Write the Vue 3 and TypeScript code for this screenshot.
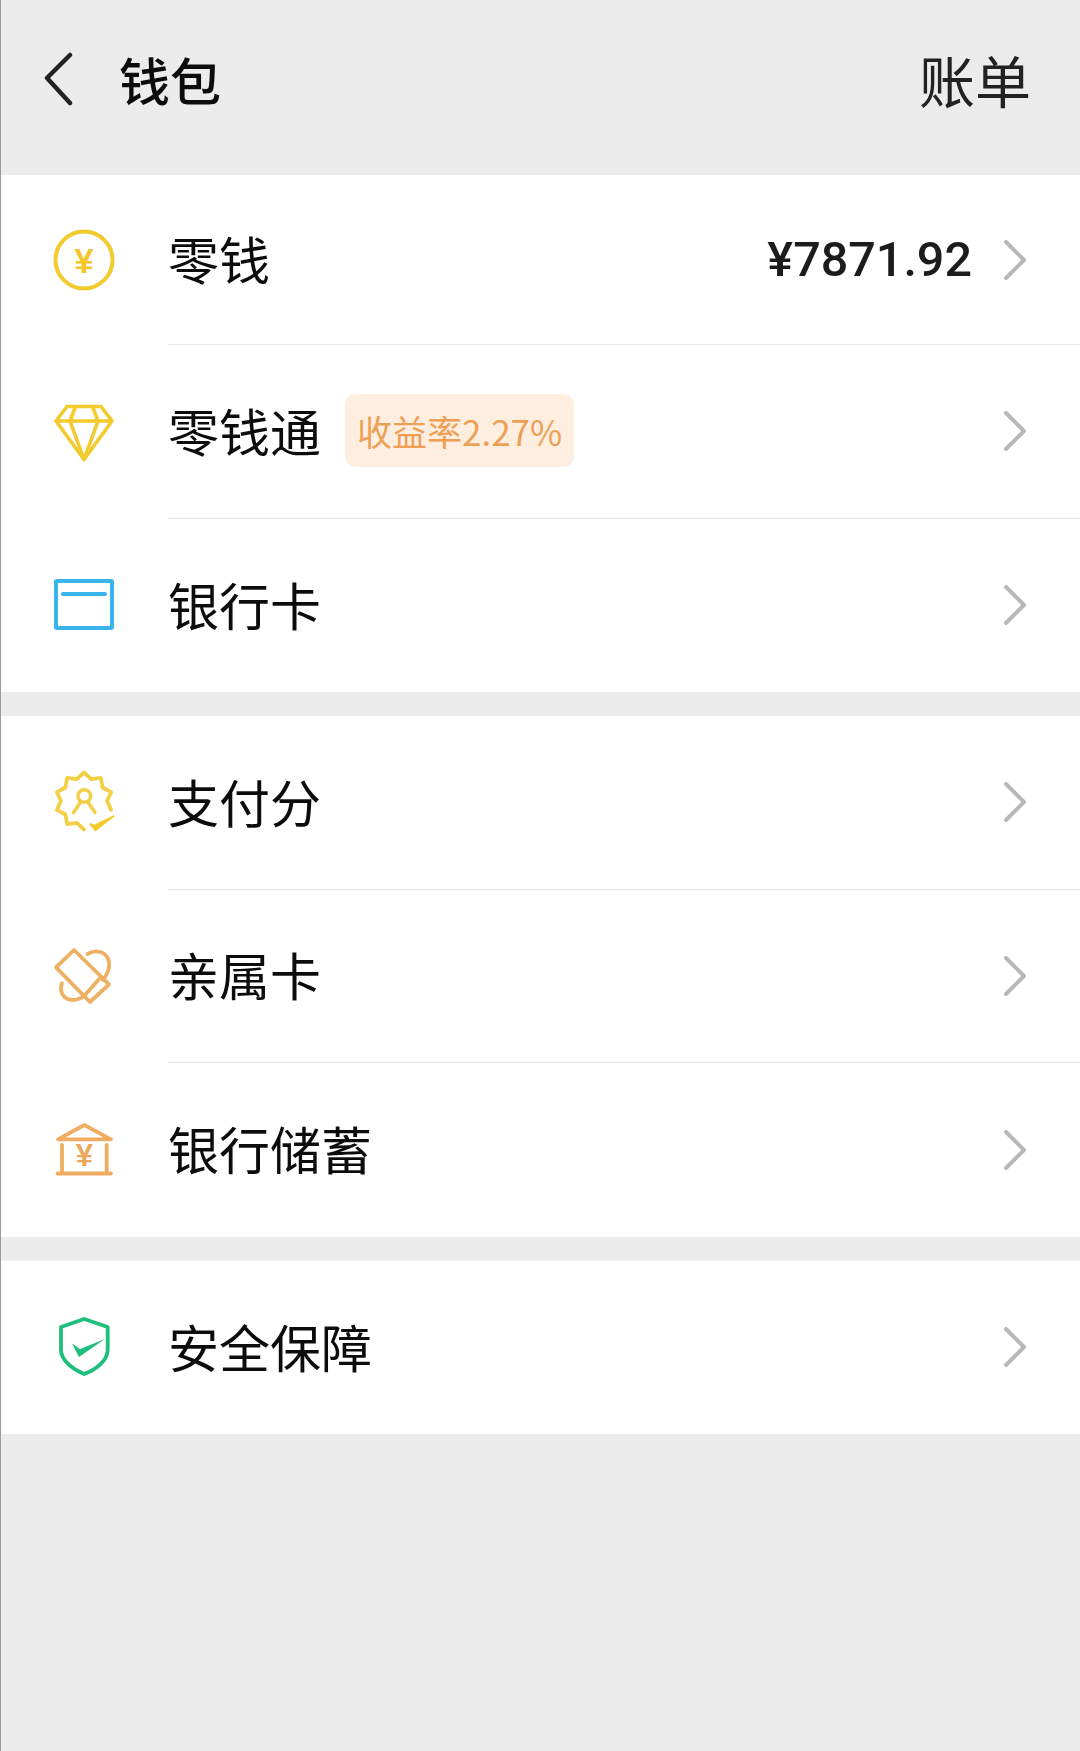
<script setup lang="ts">
interface Row {
  icon: string
  label: string
  tag?: string
  amount?: string
}

const groups: Row[][] = [
  [
    { icon: 'coin', label: '零钱', amount: '¥7871.92' },
    { icon: 'diamond', label: '零钱通', tag: '收益率2.27%' },
    { icon: 'card', label: '银行卡' },
  ],
  [
    { icon: 'score', label: '支付分' },
    { icon: 'family', label: '亲属卡' },
    { icon: 'bank', label: '银行储蓄' },
  ],
  [{ icon: 'shield', label: '安全保障' }],
]

// wavy badge outline for the score icon, open at the lower right for the tick
const scoreOutline = (() => {
  const pts: string[] = []
  const tips = 10
  for (let i = 0; i <= tips * 2; i++) {
    const deg = i * (180 / tips)
    if (deg > 115 && deg < 165) continue
    const r = i % 2 === 0 ? 28.5 : 23
    const a = ((deg - 90) * Math.PI) / 180
    pts.push(`${(35 + r * Math.cos(a)).toFixed(1)} ${(33 + r * Math.sin(a)).toFixed(1)}`)
  }
  // start after the gap so the line does not cross it
  const idx = pts.findIndex((_, i) => i * (180 / tips) > 115)
  return 'M' + [...pts.slice(idx), ...pts.slice(1, idx)].join(' L')
})()
</script>

<template>
  <div class="page">
    <header class="topbar">
      <svg class="back" width="30" height="54" viewBox="0 0 30 54">
        <path d="M27 3 L4 26 L27 51" fill="none" stroke="#222" stroke-width="4.5" stroke-linecap="round" stroke-linejoin="round" />
      </svg>
      <div class="title">钱包</div>
      <div class="bill">账单</div>
    </header>

    <section v-for="(group, g) in groups" :key="g" class="group">
      <div v-for="(row, i) in group" :key="row.label" class="row" :class="{ short: g === 0 && i === 0 }">
        <svg class="icon" width="70" height="70" viewBox="0 0 70 70" fill="none" stroke-linecap="round" stroke-linejoin="round">
          <template v-if="row.icon === 'coin'">
            <circle cx="35" cy="35" r="28.5" stroke="#f3cb2e" stroke-width="4" />
            <text x="35" y="47.5" text-anchor="middle" class="yen" fill="#f3c72b" font-size="35">¥</text>
          </template>
          <template v-else-if="row.icon === 'diamond'">
            <path d="M18 9.5 H52 L63 24 L35 62.5 L7 24 Z M7 24 H63 M26.5 9.5 L21 24 L35 62.5 L49 24 L43.5 9.5" stroke="#f3cb2e" stroke-width="3.6" />
          </template>
          <template v-else-if="row.icon === 'card'">
            <rect x="7" y="11" width="56" height="47" rx="1" stroke="#3ab5ec" stroke-width="4" />
            <path d="M14 24 H56" stroke="#3ab5ec" stroke-width="4" />
          </template>
          <template v-else-if="row.icon === 'score'">
            <path :d="scoreOutline" stroke="#f3cf45" stroke-width="3.8" />
            <circle cx="35.3" cy="28" r="6.3" stroke="#f3cf45" stroke-width="3.4" />
            <path d="M24.5 44.5 L31 35 M46 44.5 L39.5 35" stroke="#f3cf45" stroke-width="3.4" />
            <path d="M41 56 L45.5 57.5 L65 48 L46.5 62.5 Z" fill="#f3cb2e" stroke="#f3cb2e" stroke-width="1.5" />
          </template>
          <template v-else-if="row.icon === 'family'">
            <path d="M25 9 L7 26.3 L41 61 L60 43.3 Z M52 36 L35.5 54.5" stroke="#eeb064" stroke-width="3.8" />
            <path d="M38.5 13 C47 8 58 10 60 21 C61 28 58 34 54 39 M13 42.3 C10 50 14 59 24 59 C28 59 32 57 35 55" stroke="#eeb064" stroke-width="3.8" />
          </template>
          <template v-else-if="row.icon === 'bank'">
            <path d="M9 24.3 L35.3 10 L62 24.3 Z" stroke="#f0ac60" stroke-width="3.8" />
            <path d="M13 30 V58 M57.7 30 V58 M8.5 58.5 H62" stroke="#f0ac60" stroke-width="3.8" />
            <text x="35.3" y="50.5" text-anchor="middle" class="yen" fill="#eda85c" font-size="31">¥</text>
          </template>
          <template v-else-if="row.icon === 'shield'">
            <path d="M35.3 7 L58.7 15 V38 C58.7 49 46 58 35.3 62 C25 58 12 49 12 38 V15 Z" stroke="#1fbf7b" stroke-width="3.8" />
            <path d="M23 31.5 L31 37 L56 27 L30 45 Z" fill="#1fbf7b" />
          </template>
        </svg>

        <div class="row-body" :class="{ last: i === group.length - 1 }">
          <span class="label">{{ row.label }}</span>
          <span v-if="row.tag" class="tag">{{ row.tag }}</span>
          <span v-if="row.amount" class="amount">{{ row.amount }}</span>
          <svg class="chevron" width="24" height="40" viewBox="0 0 24 40">
            <path d="M3 2 L21 20 L3 38" fill="none" stroke="#b8b8b8" stroke-width="4" stroke-linecap="round" stroke-linejoin="round" />
          </svg>
        </div>
      </div>
    </section>
  </div>
</template>

<style>
html,
body {
  margin: 0;
  background: #ececec;
}
</style>

<style scoped>
.page {
  box-sizing: border-box;
  min-height: 1751px;
  width: 1080px;
  background: #ececec;
  border-left: 1px solid #9a9a9a;
  font-family: "Noto Sans CJK SC", "Liberation Sans", sans-serif;
  color: #1a1a1a;
}

.topbar {
  display: flex;
  align-items: center;
  height: 175px;
  padding: 0 49px 18px 42px;
  box-sizing: border-box;
}

.back {
  flex: none;
}

.title {
  margin-left: 46px;
  font-size: 51px;
  font-weight: 500;
  color: #0c0c0c;
}

.bill {
  margin-left: auto;
  font-size: 56px;
  color: #222;
}

.group {
  background: #fff;
  margin-bottom: 24px;
}

.row {
  display: flex;
  align-items: stretch;
  height: 173.5px;
  padding-left: 48px;
}

.row.short {
  height: 170px;
}

.icon {
  flex: none;
  align-self: center;
  margin-right: 49px;
}

.yen {
  font-family: "Liberation Sans", sans-serif;
  font-weight: 700;
  stroke: none;
}

.row-body {
  flex: 1;
  display: flex;
  align-items: center;
  padding-right: 53px;
  border-bottom: 1px solid #e6e6e6;
}

.row-body.last {
  border-bottom: none;
}

.label {
  margin-bottom: 3px;
  font-size: 51px;
  color: #0c0c0c;
}

.tag {
  margin-left: 24px;
  margin-bottom: 2px;
  padding: 0 12px;
  height: 73px;
  line-height: 73px;
  border-radius: 11px;
  background: #fdeee0;
  color: #eda054;
  font-size: 35px;
}

.amount {
  margin-left: auto;
  margin-right: 31px;
  font-family: Roboto, "Liberation Sans", sans-serif;
  font-size: 48.5px;
  font-weight: 500;
  color: #1c1c1c;
}

.chevron {
  flex: none;
}

.tag ~ .chevron,
.label:first-child + .chevron {
  margin-left: auto;
}
</style>
